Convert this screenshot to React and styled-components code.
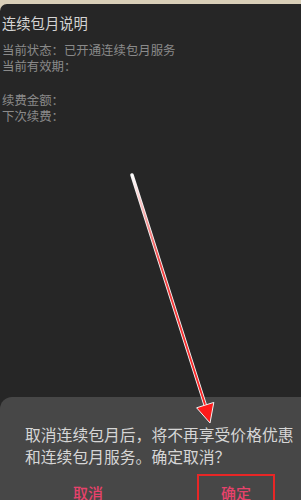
import React from "react";
import styled, { createGlobalStyle } from "styled-components";

const Global = createGlobalStyle`
  html, body {
    margin: 0;
    padding: 0;
    height: 500px;
    overflow: hidden;
    background: #d9cfb8;
  }
  body {
    font-family: "Noto Sans CJK SC", "Noto Sans", sans-serif;
  }
`;

const Screen = styled.div`
  position: relative;
  width: 301px;
  height: 500px;
  display: flex;
  flex-direction: column;
  background: #d9cfb8;
  overflow: hidden;
`;

const TopStrip = styled.div`
  height: 4px;
  flex-shrink: 0;
`;

const Page = styled.div`
  flex: 1;
  display: flex;
  flex-direction: column;
  background: #262626;
  border-top-left-radius: 7px;
`;

const Content = styled.div`
  padding: 9px 0 0 2px;
`;

const Title = styled.div`
  font-size: 14.3px;
  line-height: 20px;
  color: #d4d4d4;
`;

const Details = styled.div`
  margin-top: 8.5px;
  font-size: 12.4px;
  color: #8a8a8a;
`;

const Line = styled.div`
  height: 16.7px;
  line-height: 16.7px;
  white-space: nowrap;
`;

const Sheet = styled.div`
  margin-top: auto;
  height: 103px;
  background: #474747;
  border-top-left-radius: 12px;
  padding: 27px 0 0 25px;
  box-sizing: border-box;
  overflow: hidden;
`;

const Message = styled.div`
  font-size: 15.8px;
  line-height: 22px;
  color: #d6d6d6;
  white-space: nowrap;
`;

const Actions = styled.div`
  display: flex;
  gap: 70px;
  margin-top: 6px;
  padding-left: 24px;
`;

const Action = styled.div`
  width: 78px;
  height: 36px;
  box-sizing: border-box;
  display: flex;
  align-items: center;
  justify-content: center;
  font-size: 15px;
  font-weight: 500;
  color: #e6426b;
  border: ${(p) => (p.$marked ? "2px solid #e82626" : "2px solid transparent")};
`;

const Overlay = styled.svg`
  position: absolute;
  left: 0;
  top: 0;
  pointer-events: none;
`;

function Arrow() {
  return (
    <Overlay width="301" height="500" viewBox="0 0 301 500">
      <defs>
        <linearGradient id="shaft" x1="132" y1="175" x2="210" y2="422" gradientUnits="userSpaceOnUse">
          <stop offset="0" stopColor="#ffffff" />
          <stop offset="0.35" stopColor="#f04040" />
          <stop offset="1" stopColor="#ff1a1a" />
        </linearGradient>
      </defs>
      <line x1="132" y1="175" x2="205.5" y2="406" stroke="#f2f2f2" strokeWidth="3.6" strokeLinecap="round" />
      <line x1="132" y1="175" x2="205.5" y2="406" stroke="url(#shaft)" strokeWidth="1.8" strokeLinecap="round" />
      <polygon
        points="210,423 196.6,407.8 213.8,402.4"
        fill="#ff1a1a"
        stroke="#f2f2f2"
        strokeWidth="1"
        strokeLinejoin="round"
      />
    </Overlay>
  );
}

export default function App() {
  return (
    <>
      <Global />
      <Screen>
        <TopStrip />
        <Page>
          <Content>
            <Title>连续包月说明</Title>
            <Details>
              <Line>当前状态：已开通连续包月服务</Line>
              <Line>当前有效期：</Line>
              <Line />
              <Line>续费金额：</Line>
              <Line>下次续费：</Line>
            </Details>
          </Content>
          <Sheet>
            <Message>取消连续包月后，将不再享受价格优惠</Message>
            <Message>和连续包月服务。确定取消？</Message>
            <Actions>
              <Action>取消</Action>
              <Action $marked>确定</Action>
            </Actions>
          </Sheet>
        </Page>
        <Arrow />
      </Screen>
    </>
  );
}
